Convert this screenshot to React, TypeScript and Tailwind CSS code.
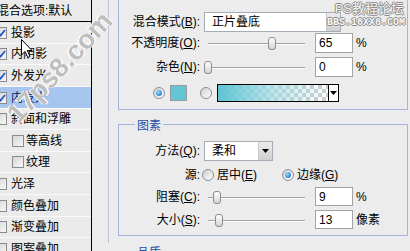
import React from 'react';

const rows = [
  { label: '投影', checked: true, h: 'h-[22px]' },
  { label: '内阴影', checked: true, h: 'h-[21px]' },
  { label: '外发光', checked: true, h: 'h-[22px]' },
  { label: '内发光', checked: true, h: 'h-[22px]', active: true },
  { label: '斜面和浮雕', checked: false, h: 'h-[21px]' },
  { label: '等高线', checked: false, h: 'h-[22px]', sub: true },
  { label: '纹理', checked: false, h: 'h-[21px]', sub: true },
  { label: '光泽', checked: false, h: 'h-[22px]' },
  { label: '颜色叠加', checked: false, h: 'h-[22px]' },
  { label: '渐变叠加', checked: false, h: 'h-[21px]' },
  { label: '图案叠加', checked: false, h: 'h-[22px]' },
];

function Check({ checked }: { checked: boolean }) {
  return (
    <span className="w-[12px] h-[12px] shrink-0 border border-[#8b8b8b] bg-linear-to-br from-[#d6d6d6] to-[#f7f7f7] flex items-center justify-center">
      {checked && (
        <svg width="9" height="8" viewBox="0 0 9 8">
          <path d="M1 3.5 L3.5 6.5 L8 1" stroke="#2458c8" strokeWidth="1.8" fill="none" />
        </svg>
      )}
    </span>
  );
}

function Radio({ on }: { on: boolean }) {
  return (
    <span className="w-[12px] h-[12px] shrink-0 rounded-full border border-[#8a8f99] bg-linear-to-br from-[#cfcfcf] to-[#ffffff] flex items-center justify-center">
      {on && <span className="w-[6px] h-[6px] rounded-full bg-[radial-gradient(circle_at_35%_35%,#8fdcff,#0b5ec4)]" />}
    </span>
  );
}

function Arrow() {
  return (
    <svg width="7" height="4" viewBox="0 0 7 4">
      <path d="M0 0 H7 L3.5 4 Z" fill="#000" />
    </svg>
  );
}

// pos: thumb centre on the page x axis
function Slider({ pos }: { pos: number }) {
  return (
    <div className="relative w-[105px] h-[20px] shrink-0">
      <div className="absolute left-[4px] right-[4px] top-[10px] h-[1px] bg-[#a2a2a2]" />
      <div className="absolute left-[4px] right-[4px] top-[11px] h-[1px] bg-white" />
      <div
        className="absolute top-[4px] w-[8px] h-[13px] rounded-[3px] border border-[#8c8c8c] bg-linear-to-b from-[#ffffff] to-[#d2d2d2]"
        style={{ left: pos - 208 }}
      />
    </div>
  );
}

function Field({ value, unit, h = 'h-[20px]' }: { value: string; unit: string; h?: string }) {
  return (
    <>
      <div className={`ml-[6px] w-[38px] ${h} border border-[#a3a3a3] bg-white pl-[3px] flex items-center text-[12px]`}>{value}</div>
      <span className="ml-[3px]">{unit}</span>
    </>
  );
}

function Label({ children }: { children: React.ReactNode }) {
  return <span className="w-[81px] shrink-0 text-right whitespace-nowrap">{children}</span>;
}

function Select({ value, w }: { value: string; w: string }) {
  return (
    <div className={`ml-[4px] ${w} h-[20px] border border-[#a5acb5] bg-white flex`}>
      <span className="flex-1 pl-[7px] flex items-center">{value}</span>
      <span className="w-[14px] bg-linear-to-b from-[#ececec] to-[#cfcfcf] border-l border-[#c8c8c8] flex items-center justify-center">
        <Arrow />
      </span>
    </div>
  );
}

export default function App() {
  return (
    <div className="relative w-[410px] h-[251px] overflow-hidden flex bg-[#ececec] text-black text-[12px] font-['Liberation_Sans','Noto_Sans_CJK_SC',sans-serif]">
      {/* style list */}
      <div className="w-[92px] shrink-0 border-r border-black bg-[#ebebeb] flex flex-col">
        <div className="h-[22px] shrink-0 border-b border-black flex items-center whitespace-nowrap ml-[-3px]">混合选项:默认</div>
        {rows.map((r) => (
          <div
            key={r.label}
            className={`${r.h} shrink-0 border-b border-[#fafafa] flex items-center whitespace-nowrap ${
              r.active ? 'bg-[#a6c5ef] text-[#0c2466]' : ''
            } ${r.sub ? 'pl-[12px] gap-[2px]' : 'ml-[-5px] gap-[4px]'}`}
          >
            <Check checked={r.checked} />
            <span>{r.label}</span>
          </div>
        ))}
      </div>

      {/* settings */}
      <div className="flex-1 pl-[16px]">
        <div className="h-full border-l border-[#b9c1dc] pl-[9px] pr-[2px]">
          {/* 结构 */}
          <div className="relative mt-[-8px] border border-[#a6b4dd] pt-[19px] pb-[7px]">
            <span className="absolute left-[16px] top-[-8px] px-[2px] bg-[#ececec] text-[#1f4fa6]">结构</span>
            <div className="flex items-center h-[20px]">
              <Label>混合模式(<u>B</u>):</Label>
              <Select value="正片叠底" w="w-[137px]" />
            </div>
            <div className="flex items-center h-[20px] mt-[1px]">
              <Label>不透明度(<u>O</u>):</Label>
              <div className="ml-[4px] flex items-center">
                <Slider pos={272} />
                <Field value="65" unit="%" />
              </div>
            </div>
            <div className="flex items-center h-[20px] mt-[4px]">
              <Label>杂色(<u>N</u>):</Label>
              <div className="ml-[4px] flex items-center">
                <Slider pos={208} />
                <Field value="0" unit="%" />
              </div>
            </div>
            <div className="flex items-center h-[18px] mt-[7px] pl-[34px]">
              <Radio on />
              <span className="ml-[5px] w-[17px] h-[16px] border border-[#9a9a9a] bg-[#62c6d4]" />
              <span className="ml-[13px]"><Radio on={false} /></span>
              <div className="ml-[5px] w-[122px] h-[18px] border border-black flex">
                <div className="flex-1 relative bg-[repeating-conic-gradient(#cdcdcd_0_25%,#ffffff_0_50%)] bg-[length:8px_8px]">
                  <div className="absolute inset-0 bg-linear-to-r from-[#5ec4d4] via-[#9fdbe4]/70 to-transparent" />
                </div>
                <div className="w-[10px] border-l border-black bg-white flex items-center justify-center">
                  <Arrow />
                </div>
              </div>
            </div>
          </div>

          {/* 图素 */}
          <div className="relative mt-[14px] border border-[#a6b4dd] pt-[16px] h-[112px]">
            <span className="absolute left-[16px] top-[-8px] px-[2px] bg-[#ececec] text-[#1f4fa6]">图素</span>
            <div className="flex items-center h-[20px]">
              <Label>方法(<u>Q</u>):</Label>
              <Select value="柔和" w="w-[69px]" />
            </div>
            <div className="flex items-center h-[14px] mt-[7px]">
              <Label>源:</Label>
              <span className="ml-[2px]"><Radio on={false} /></span>
              <span className="ml-[3px]">居中(<u>E</u>)</span>
              <span className="ml-[25px]"><Radio on /></span>
              <span className="ml-[3px]">边缘(<u>G</u>)</span>
            </div>
            <div className="flex items-center h-[19px] mt-[5px]">
              <Label>阻塞(<u>C</u>):</Label>
              <div className="ml-[4px] flex items-center">
                <Slider pos={217} />
                <Field value="9" unit="%" h="h-[19px]" />
              </div>
            </div>
            <div className="flex items-center h-[19px] mt-[4px]">
              <Label>大小(<u>S</u>):</Label>
              <div className="ml-[4px] flex items-center">
                <Slider pos={219} />
                <Field value="13" unit="像素" h="h-[19px]" />
              </div>
            </div>
          </div>

          {/* 品质 */}
          <div className="relative mt-[15px] border border-[#a6b4dd] h-[40px]">
            <span className="absolute left-[16px] top-[-8px] px-[2px] bg-[#ececec] text-[#1f4fa6]">品质</span>
          </div>
        </div>
      </div>

      {/* watermarks */}
      <div className="absolute left-[-15px] top-[54px] w-[150px] text-center text-[27px] font-bold leading-none text-[#9a9a9a]/65 rotate-[-47deg] [text-shadow:1px_1px_0_#ffffff,-1px_-1px_0_#ffffff] pointer-events-none">
        17ps8.com
      </div>
      <div className="absolute right-[6px] top-[2px] flex flex-col items-end leading-none pointer-events-none">
        <span className="text-[13px] text-[#f6f6f6] [text-shadow:1px_0_#8a8a8a,-1px_0_#8a8a8a,0_1px_#8a8a8a,0_-1px_#8a8a8a]">PS教程论坛</span>
        <span className="mt-[3px] mr-[-1px] text-[10px] font-bold font-['Liberation_Mono',monospace] text-[#f6f6f6] [text-shadow:1px_0_#8a8a8a,-1px_0_#8a8a8a,0_1px_#8a8a8a,0_-1px_#8a8a8a]">BBS.16XX8.COM</span>
      </div>
      {/* mouse pointer */}
      <svg className="absolute left-[21px] top-[39px]" width="12" height="20" viewBox="0 0 12 20">
        <path d="M0.5 0.5 V16 L4 12.5 L6.8 18.5 L9 17.5 L6.3 11.5 H11 Z" fill="#fff" stroke="#000" strokeWidth="1" />
      </svg>
    </div>
  );
}
